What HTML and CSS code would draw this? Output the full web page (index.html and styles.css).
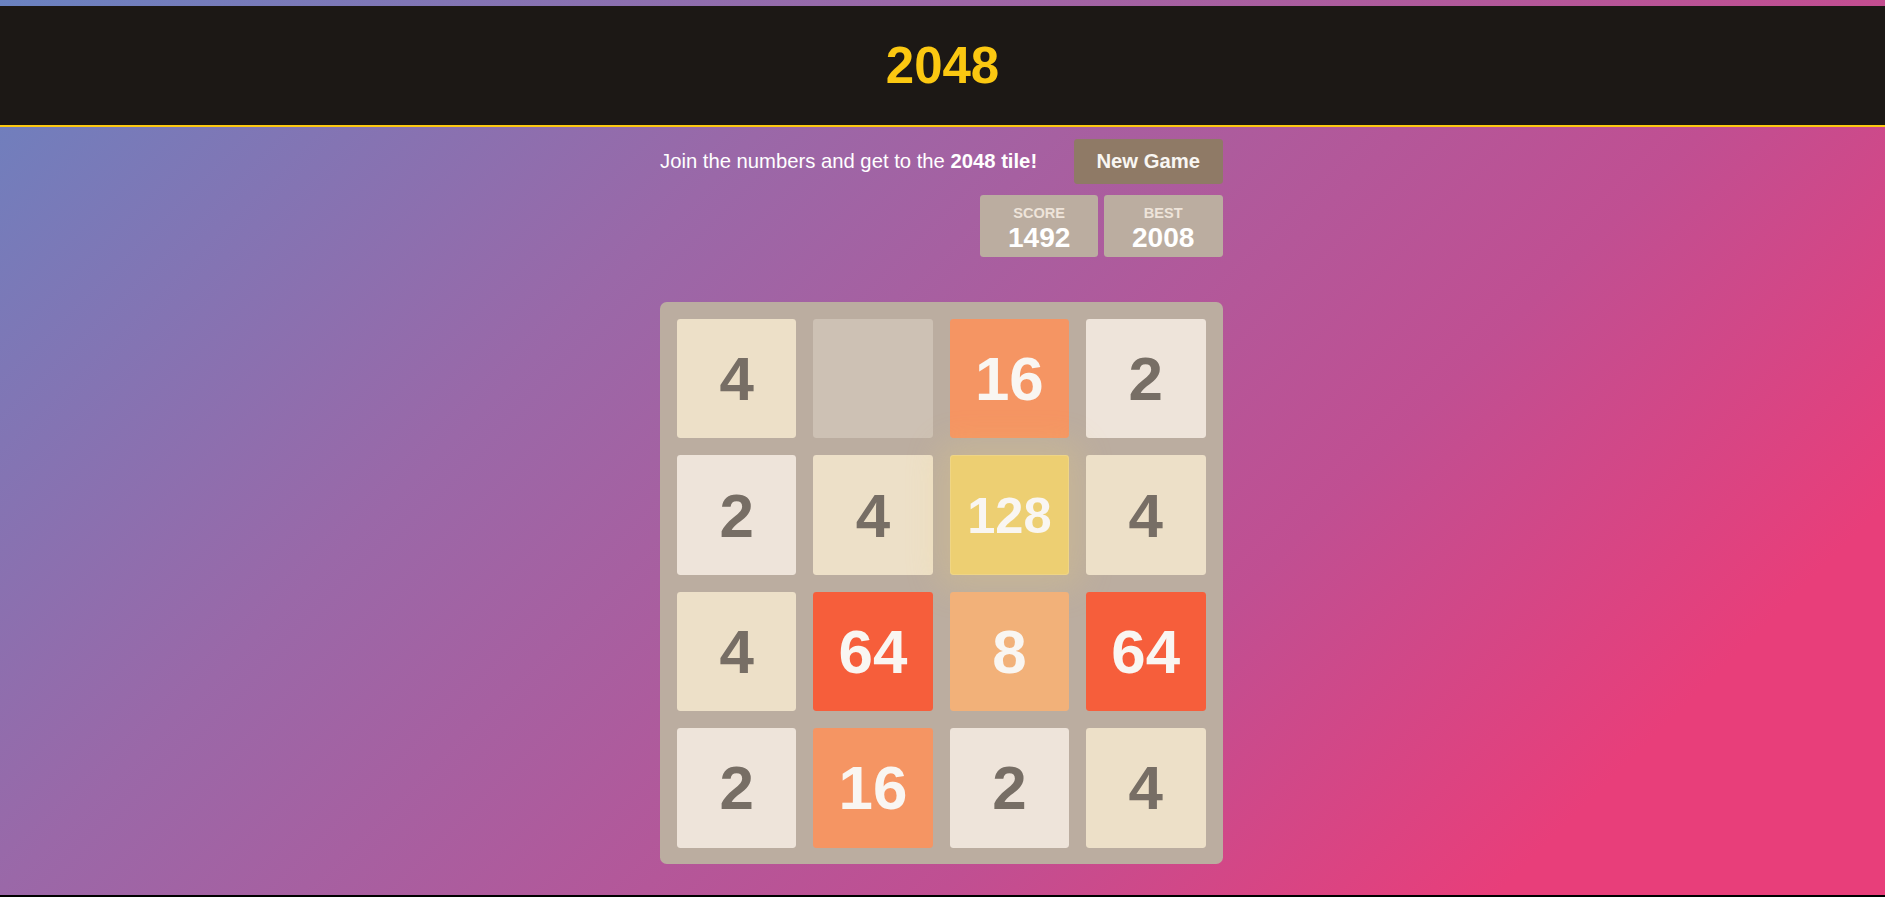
FILE: index.html
```html
<!DOCTYPE html>
<html lang="en">
<head>
<meta charset="utf-8">
<title>2048</title>
<link rel="stylesheet" href="styles.css">
</head>
<body>
<div class="page">
  <header class="topbar">
    <h1 class="title">2048</h1>
  </header>
  <main class="game">
    <div class="above">
      <p class="intro">Join the numbers and get to the <strong>2048 tile!</strong></p>
      <button class="restart">New Game</button>
    </div>
    <div class="scores">
      <div class="score-box"><span class="label">Score</span><span class="value">1492</span></div>
      <div class="score-box"><span class="label">Best</span><span class="value">2008</span></div>
    </div>
    <div class="board">
      <div class="tile t4">4</div>
      <div class="tile empty"></div>
      <div class="tile t16">16</div>
      <div class="tile t2">2</div>

      <div class="tile t2">2</div>
      <div class="tile t4">4</div>
      <div class="tile t128">128</div>
      <div class="tile t4">4</div>

      <div class="tile t4">4</div>
      <div class="tile t64">64</div>
      <div class="tile t8">8</div>
      <div class="tile t64">64</div>

      <div class="tile t2">2</div>
      <div class="tile t16">16</div>
      <div class="tile t2">2</div>
      <div class="tile t4">4</div>
    </div>
  </main>
</div>
</body>
</html>
```
FILE: styles.css
```css
html {
  background: #000;
}
body {
  margin: 0;
  font-family: "Liberation Sans", Arial, sans-serif;
}
.page {
  height: calc(100vh - 2px);
  box-sizing: border-box;
  padding-top: 6px;
  background: linear-gradient(135deg, #6a82c0 0%, #9a68a8 32%, #c04f92 66%, #e83e7a 86%, #e83e7a 100%);
  overflow: hidden;
}
.topbar {
  height: 119px;
  background: #1c1815;
  border-bottom: 2px solid #fbc811;
  display: flex;
  align-items: center;
  justify-content: center;
}
.title {
  margin: 0;
  font-size: 51px;
  font-weight: bold;
  color: #fbc811;
  line-height: 1;
}
.game {
  width: 562.5px;
  margin-left: calc(50% - 282.5px);
  padding-top: 12px;
}
.above {
  display: flex;
  align-items: center;
  justify-content: space-between;
}
.intro {
  margin: 0;
  color: #fff;
  font-size: 20.25px;
  line-height: 1.2;
}
.intro strong {
  font-weight: bold;
}
.restart {
  height: 45px;
  padding: 0 22.5px;
  border: 0;
  border-radius: 3.4px;
  background: #8f7a66;
  color: #f9f6f2;
  font-family: "Liberation Sans", Arial, sans-serif;
  font-size: 20.25px;
  font-weight: bold;
  line-height: 45px;
}
.scores {
  display: flex;
  justify-content: flex-end;
  gap: 5.6px;
  margin-top: 11px;
}
.score-box {
  height: 62px;
  box-sizing: border-box;
  padding: 10px 28px 0;
  background: #bbada0;
  border-radius: 3.4px;
  display: flex;
  flex-direction: column;
  align-items: center;
  color: #fff;
  font-weight: bold;
}
.score-box .label {
  font-size: 14.6px;
  line-height: 17px;
  text-transform: uppercase;
  color: #eee4da;
}
.score-box .value {
  font-size: 28.1px;
  line-height: 32px;
}
.board {
  margin-top: 45px;
  padding: 16.875px;
  background: #bbada0;
  border-radius: 6.75px;
  display: grid;
  grid-template-columns: repeat(4, 119.5px);
  grid-auto-rows: 119.5px;
  gap: 16.875px;
}
.tile {
  border-radius: 3.4px;
  display: flex;
  align-items: center;
  justify-content: center;
  font-size: 61.875px;
  font-weight: bold;
  color: #776e65;
}
.empty {
  background: #cdc1b4;
}
.t2 {
  background: #eee4da;
}
.t4 {
  background: #ede0c8;
}
.t8 {
  background: #f2b179;
  color: #f9f6f2;
}
.t16 {
  background: #f59563;
  color: #f9f6f2;
}
.t64 {
  background: #f65e3b;
  color: #f9f6f2;
}
.t128 {
  background: #edcf72;
  color: #f9f6f2;
  font-size: 50.6px;
  box-shadow: 0 0 34px 11px rgba(243, 215, 116, 0.2381), inset 0 0 0 1px rgba(255, 255, 255, 0.14286);
}
```
